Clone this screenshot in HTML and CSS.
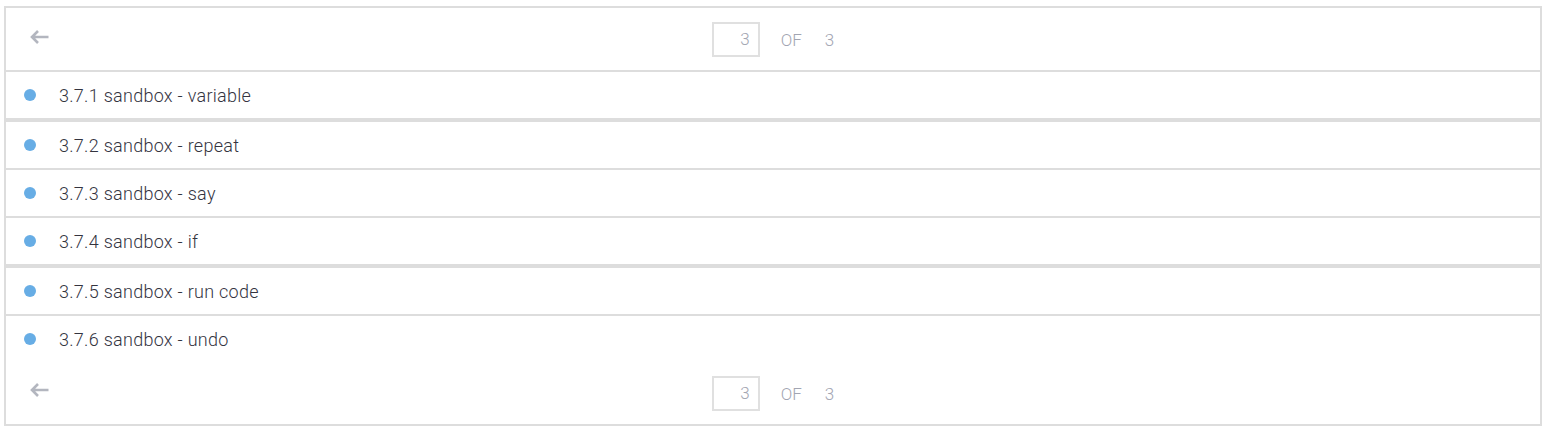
FILE: index.html
```html
<!DOCTYPE html>
<html>
<head>
<meta charset="utf-8">
<link rel="stylesheet" href="styles.css">
</head>
<body>
<div class="panel">
  <div class="pager">
    <span class="back"><svg width="20" height="16" viewBox="0 0 20 16"><path d="M19.5 8H3M9 2L3 8l6 6" fill="none" stroke="#b3b6bf" stroke-width="2.6"/></svg></span>
    <div class="pages"><span class="pagebox">3</span><span class="of">OF</span><span class="total">3</span></div>
  </div>
  <ul class="list">
    <li class="item"><span class="dot"></span>3.7.1 sandbox - variable</li>
    <li class="item gap"><span class="dot"></span>3.7.2 sandbox - repeat</li>
    <li class="item"><span class="dot"></span>3.7.3 sandbox - say</li>
    <li class="item"><span class="dot"></span>3.7.4 sandbox - if</li>
    <li class="item gap"><span class="dot"></span>3.7.5 sandbox - run code</li>
    <li class="item last"><span class="dot"></span>3.7.6 sandbox - undo</li>
  </ul>
  <div class="pager">
    <span class="back"><svg width="20" height="16" viewBox="0 0 20 16"><path d="M19.5 8H3M9 2L3 8l6 6" fill="none" stroke="#b3b6bf" stroke-width="2.6"/></svg></span>
    <div class="pages"><span class="pagebox">3</span><span class="of">OF</span><span class="total">3</span></div>
  </div>
</div>
</body>
</html>
```
FILE: styles.css
```css
* { box-sizing: border-box; }
html, body { margin: 0; background: #fff; }
body { padding: 6px 6px 0 4px; font-family: Roboto, "Liberation Sans", sans-serif; }
.panel {
  border: 2px solid #dddddd;
  width: 1538px;
  height: 420px;
}
.pager {
  height: 62px;
  position: relative;
  display: flex;
  align-items: center;
  justify-content: center;
}
.pager:first-child { border-bottom: 2px solid #dddddd; height: 64px; }
.back {
  position: absolute;
  left: 23px;
  top: 21px;
  display: flex;
}
.pager:last-child .back { top: 20px; }
.pages {
  display: flex;
  align-items: center;
  color: #a2a5b2;
  font-size: 17px;
  font-weight: 300;
  padding-top: 2px;
}
.pagebox {
  width: 48px;
  height: 35px;
  border: 2px solid #e0e0e0;
  display: flex;
  align-items: center;
  justify-content: flex-end;
  padding-right: 8px;
  margin-top: -2px;
}
.of { margin-left: 21px; }
.total { margin-left: 23px; }
.list { list-style: none; margin: 0; padding: 0; }
.item {
  height: 48px;
  border-bottom: 2px solid #dddddd;
  display: flex;
  align-items: center;
  padding-left: 18px;
  font-size: 18px;
  font-weight: 300;
  letter-spacing: 0.28px;
  color: #34343f;
}
.item.gap { border-top: 2px solid #dddddd; height: 50px; }
.item.last { border-bottom: none; height: 46px; }
.dot {
  width: 12px;
  height: 12px;
  border-radius: 50%;
  background: #67ade5;
  margin-right: 23px;
  flex: none;
}
```
